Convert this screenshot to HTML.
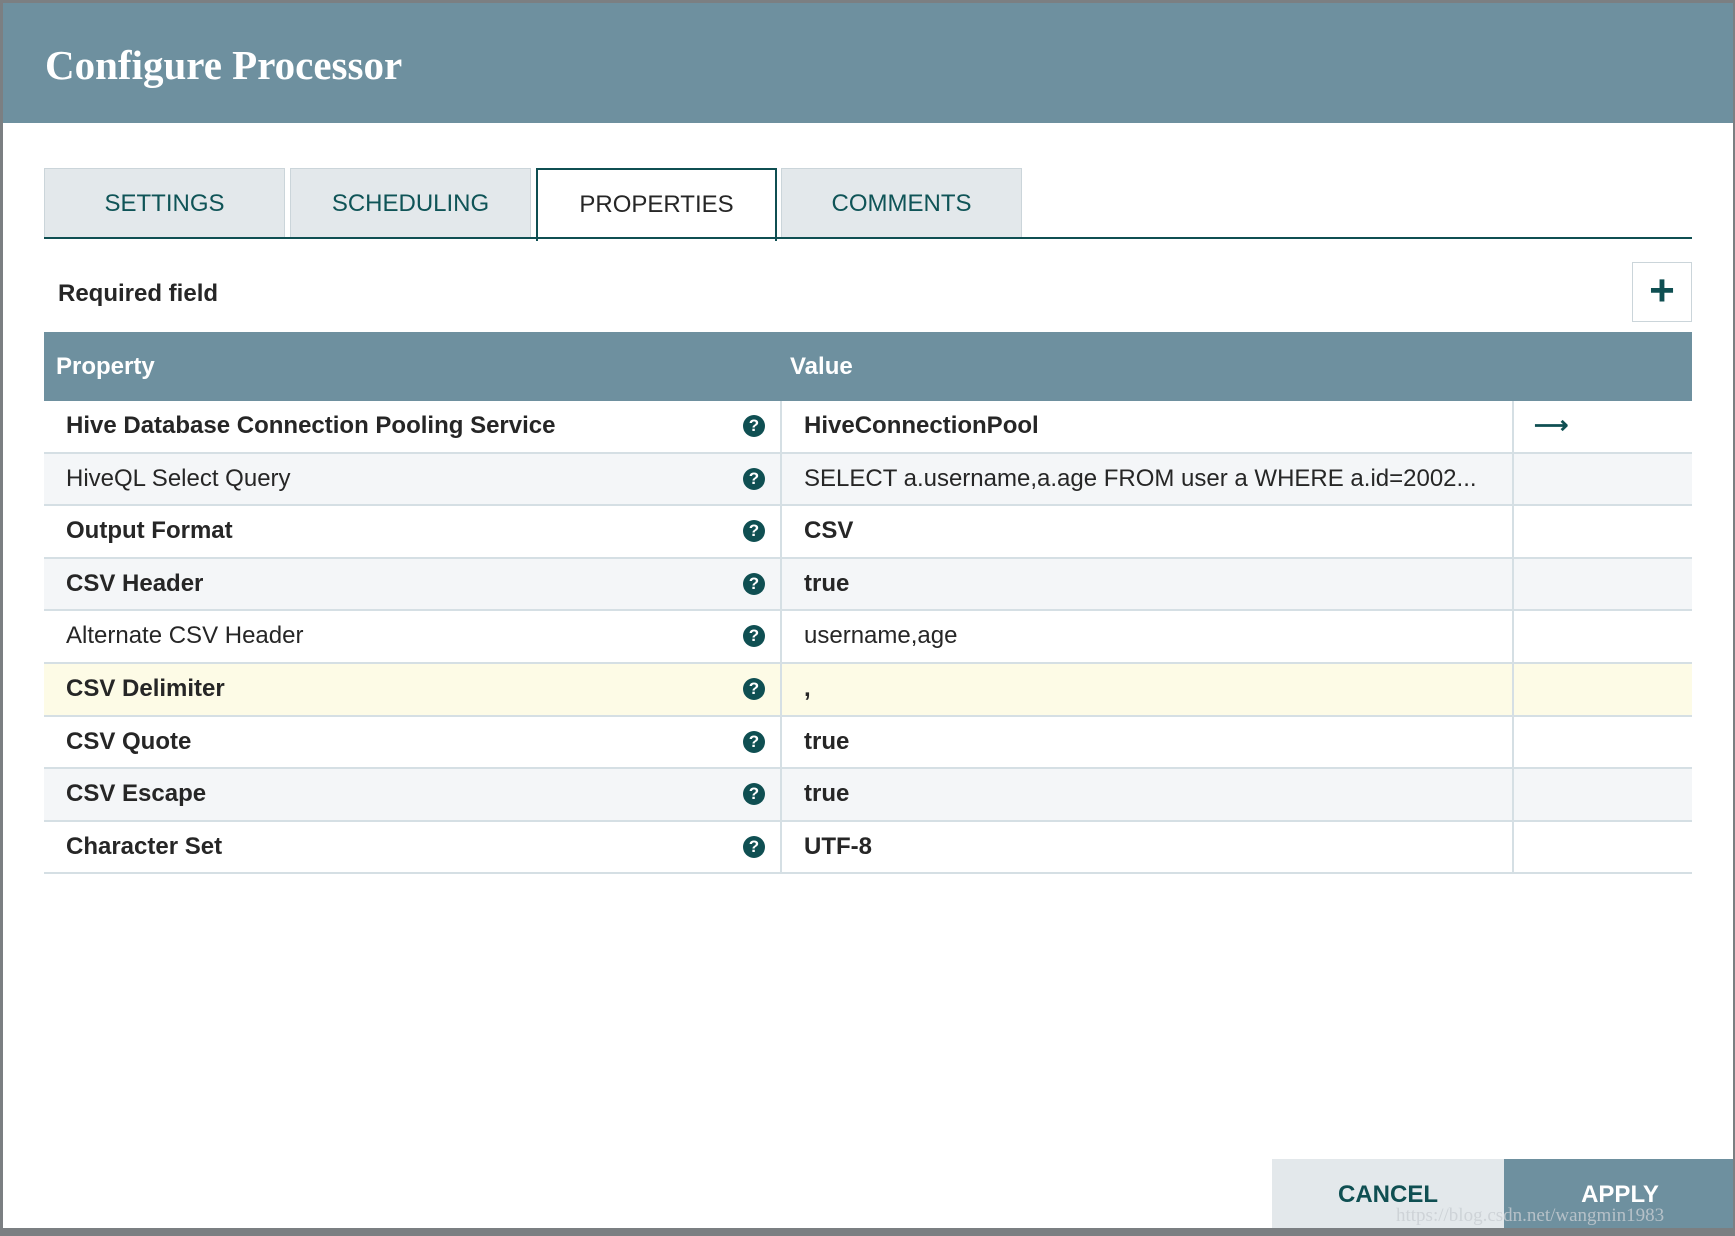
<!DOCTYPE html>
<html><head><meta charset="utf-8"><style>
*{margin:0;padding:0;box-sizing:border-box}
body{width:1735px;height:1236px;background:#7b7f82;position:relative;overflow:hidden;font-family:"Liberation Sans",sans-serif}
#dlg{position:absolute;left:3px;top:3px;width:1730px;height:1225px;background:#fff;overflow:hidden}
#hdr{position:absolute;left:0;top:0;width:100%;height:120px;background:#6e909f;color:#fff;font-family:"Liberation Serif",serif;font-weight:bold;font-size:41px;padding:38px 0 0 42px}
.tab{position:absolute;top:165px;width:241px;height:70px;background:#e3e8eb;border:1px solid #cbd5da;color:#0f5457;font-size:24px;text-align:center;line-height:70px}
.tab.act{background:#fff;color:#262626;border:2px solid #0f4f52;border-bottom:none;height:73px}
#tline{position:absolute;left:41px;top:234px;width:1648px;height:2px;background:#0f4f52}
#req{position:absolute;left:55px;top:277px;font-size:24px;font-weight:bold;color:#262626}
#plus{position:absolute;left:1629px;top:259px;width:60px;height:60px;border:1px solid #cbd5da;color:#0f4f52;font-size:44px;font-weight:bold;text-align:center;line-height:56px}
#th{position:absolute;left:41px;top:329px;width:1648px;height:69px;background:#6e909f;color:#fff;font-weight:bold;font-size:24px;line-height:69px}
.row{position:absolute;left:41px;width:1648px;height:52.6px;border-bottom:2px solid #d5dfe4;font-size:24px;color:#262626;line-height:50px}
.row div{position:absolute;top:0;height:100%}
.p{left:22px}
.q{left:699px;width:22px;height:22px!important;top:14px!important;border-radius:50%;background:#0f4f52;color:#fff;font-size:17px;font-weight:bold;line-height:22px;text-align:center}
.v{left:736px;width:732px;border-left:2px solid #d5dfe4;padding-left:22px;white-space:nowrap;overflow:hidden}
.e{left:1468px;width:180px;border-left:2px solid #d5dfe4;padding-left:20px;color:#0f4f52;font-weight:bold}
.b{font-weight:bold}
.alt{background:#f4f6f8}
.yel{background:#fdfbe6}
#cancel{position:absolute;left:1269px;top:1156px;width:232px;height:72px;background:#e3e8eb;color:#0f4f52;font-size:24px;font-weight:bold;text-align:center;line-height:72px}
#apply{position:absolute;left:1501px;top:1156px;width:232px;height:72px;background:#6e909f;color:#fff;font-size:24px;font-weight:bold;text-align:center;line-height:72px}
#wm{position:absolute;left:1393px;top:1202px;font-family:"Liberation Serif",serif;font-size:19px;color:rgba(200,205,210,.8)}
</style></head><body>
<div id="dlg">
<div id="hdr">Configure Processor</div>
<div class="tab" style="left:41px">SETTINGS</div>
<div class="tab" style="left:287px">SCHEDULING</div>
<div class="tab act" style="left:533px">PROPERTIES</div>
<div class="tab" style="left:778px">COMMENTS</div>
<div id="tline"></div>
<div id="req">Required field</div>
<div id="plus">+</div>
<div id="th"><span style="position:absolute;left:12px">Property</span><span style="position:absolute;left:746px">Value</span></div>

<div class="row" style="top:398px"><div class="p b">Hive Database Connection Pooling Service</div><div class="q">?</div><div class="v b">HiveConnectionPool</div><div class="e">⟶</div></div>
<div class="row alt" style="top:450.6px"><div class="p">HiveQL Select Query</div><div class="q">?</div><div class="v">SELECT a.username,a.age FROM user a WHERE a.id=2002...</div><div class="e"></div></div>
<div class="row" style="top:503.2px"><div class="p b">Output Format</div><div class="q">?</div><div class="v b">CSV</div><div class="e"></div></div>
<div class="row alt" style="top:555.8px"><div class="p b">CSV Header</div><div class="q">?</div><div class="v b">true</div><div class="e"></div></div>
<div class="row" style="top:608.4px"><div class="p">Alternate CSV Header</div><div class="q">?</div><div class="v">username,age</div><div class="e"></div></div>
<div class="row yel" style="top:661px"><div class="p b">CSV Delimiter</div><div class="q">?</div><div class="v b">,</div><div class="e"></div></div>
<div class="row" style="top:713.6px"><div class="p b">CSV Quote</div><div class="q">?</div><div class="v b">true</div><div class="e"></div></div>
<div class="row alt" style="top:766.2px"><div class="p b">CSV Escape</div><div class="q">?</div><div class="v b">true</div><div class="e"></div></div>
<div class="row" style="top:818.8px"><div class="p b">Character Set</div><div class="q">?</div><div class="v b">UTF-8</div><div class="e"></div></div>

<div id="cancel">CANCEL</div>
<div id="apply">APPLY</div>
<div id="wm">https://blog.csdn.net/wangmin1983</div>
</div>
</body></html>
